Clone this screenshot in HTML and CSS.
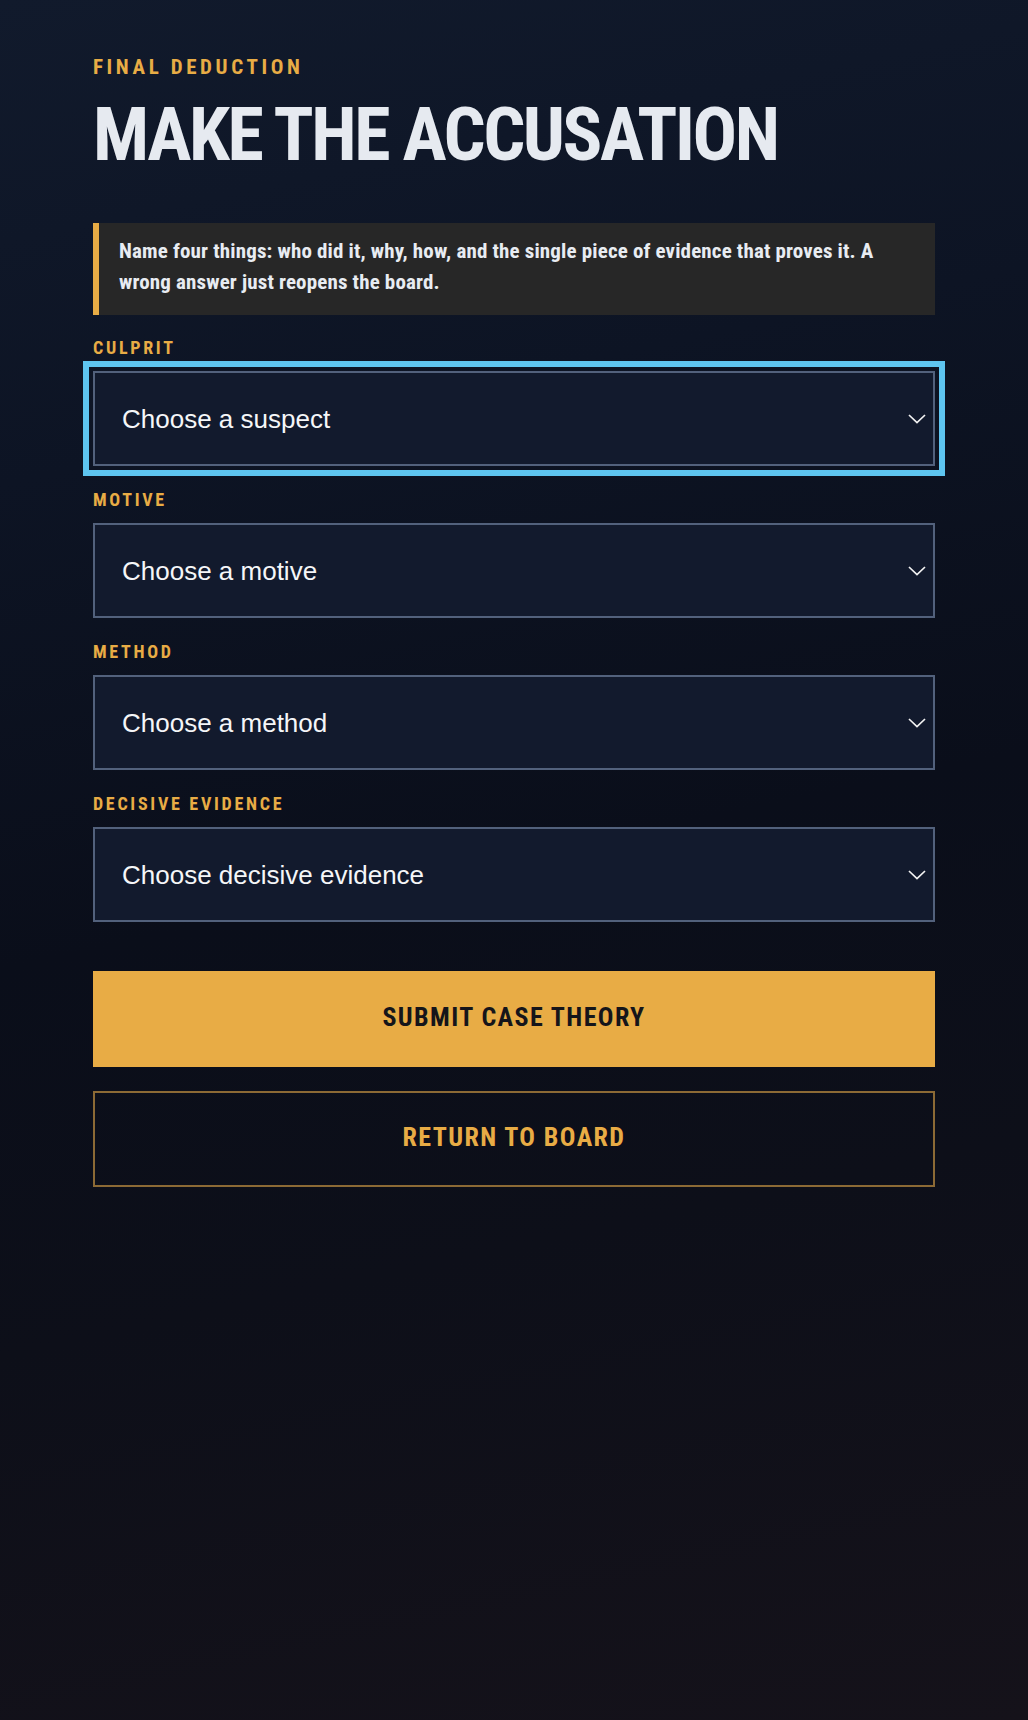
FILE: index.html
```html
<!DOCTYPE html>
<html lang="en">
<head>
<meta charset="utf-8">
<title>Make the Accusation</title>
<link rel="stylesheet" href="styles.css">
</head>
<body>
<main class="page">
  <p class="eyebrow">FINAL DEDUCTION</p>
  <h1 class="title">MAKE THE ACCUSATION</h1>
  <p class="brief">Name four things: who did it, why, how, and the single piece of evidence that proves it. A wrong answer just reopens the board.</p>
  <form class="form">
    <div class="field">
      <label class="label" for="culprit">CULPRIT</label>
      <div class="select-wrap is-focused">
        <select id="culprit" class="select">
          <option>Choose a suspect</option>
        </select>
        <svg class="chevron" viewBox="0 0 18 10" width="18" height="10" aria-hidden="true"><polyline points="1,1 9,8.6 17,1" fill="none" stroke="#f2f2f2" stroke-width="1.7"/></svg>
      </div>
    </div>
    <div class="field">
      <label class="label" for="motive">MOTIVE</label>
      <div class="select-wrap">
        <select id="motive" class="select">
          <option>Choose a motive</option>
        </select>
        <svg class="chevron" viewBox="0 0 18 10" width="18" height="10" aria-hidden="true"><polyline points="1,1 9,8.6 17,1" fill="none" stroke="#f2f2f2" stroke-width="1.7"/></svg>
      </div>
    </div>
    <div class="field">
      <label class="label" for="method">METHOD</label>
      <div class="select-wrap">
        <select id="method" class="select">
          <option>Choose a method</option>
        </select>
        <svg class="chevron" viewBox="0 0 18 10" width="18" height="10" aria-hidden="true"><polyline points="1,1 9,8.6 17,1" fill="none" stroke="#f2f2f2" stroke-width="1.7"/></svg>
      </div>
    </div>
    <div class="field">
      <label class="label" for="evidence">DECISIVE EVIDENCE</label>
      <div class="select-wrap">
        <select id="evidence" class="select">
          <option>Choose decisive evidence</option>
        </select>
        <svg class="chevron" viewBox="0 0 18 10" width="18" height="10" aria-hidden="true"><polyline points="1,1 9,8.6 17,1" fill="none" stroke="#f2f2f2" stroke-width="1.7"/></svg>
      </div>
    </div>
    <div class="actions">
      <button type="button" class="btn btn-primary">SUBMIT CASE THEORY</button>
      <button type="button" class="btn btn-secondary">RETURN TO BOARD</button>
    </div>
  </form>
</main>
</body>
</html>
```
FILE: styles.css
```css
html {
  background: linear-gradient(168deg, #111a2c 0%, #0d1424 25%, #0a0e1a 50%, #0d0f19 70%, #15121a 100%);
  min-height: 100%;
}
body {
  margin: 0;
  min-height: 1720px;
  font-family: "Roboto Condensed", "DejaVu Sans Condensed", sans-serif;
  color: #e6eaf0;
}
.page {
  max-width: 842px;
  margin: 0 auto;
  padding: 54px 0 0;
}
.eyebrow {
  margin: 0;
  font-size: 21px;
  line-height: 26px;
  font-weight: 700;
  letter-spacing: 3.6px;
  color: #e8ac45;
}
.title {
  margin: 18px 0 0;
  font-size: 74px;
  line-height: 74px;
  font-weight: 700;
  letter-spacing: -2.5px;
  color: #e6eaf0;
}
.brief {
  margin: 51px 0 0;
  padding: 13px 24px 17px 20px;
  background: #272727;
  border-left: 6px solid #e8ac45;
  font-size: 21px;
  line-height: 31px;
  font-weight: 700;
  letter-spacing: 0.15px;
  color: #e8ecf2;
}
.form {
  display: flex;
  flex-direction: column;
  gap: 23px;
  margin-top: 22px;
}
.field {
  display: flex;
  flex-direction: column;
}
.label {
  font-size: 18px;
  line-height: 22px;
  font-weight: 700;
  letter-spacing: 2.7px;
  color: #e8ac45;
  margin-bottom: 12px;
}
.select-wrap {
  position: relative;
}
.select-wrap.is-focused {
  outline: 6px solid #5ec5f0;
  outline-offset: 4px;
}
.select {
  display: block;
  width: 100%;
  height: 95px;
  margin: 0;
  padding: 0 60px 0 27px;
  appearance: none;
  -webkit-appearance: none;
  background: #121a2d;
  border: 2px solid #52617c;
  border-radius: 0;
  color: #f5f6f8;
  font-family: "Liberation Sans", Arial, sans-serif;
  font-size: 26px;
}
.select:focus {
  outline: none;
}
.chevron {
  position: absolute;
  right: 9px;
  top: 43px;
  pointer-events: none;
}
.actions {
  display: flex;
  flex-direction: column;
  gap: 24px;
  margin-top: 26px;
}
.btn {
  display: block;
  width: 100%;
  height: 96px;
  margin: 0;
  padding: 0 0 4px;
  border-radius: 0;
  font-family: "Roboto Condensed", "DejaVu Sans Condensed", sans-serif;
  font-size: 26px;
  font-weight: 700;
  letter-spacing: 1.4px;
  cursor: pointer;
}
.btn-primary {
  background: #e8ac45;
  border: 0;
  color: #15151a;
}
.btn-secondary {
  background: transparent;
  border: 2px solid #8c6a35;
  color: #e8ac45;
}
```
